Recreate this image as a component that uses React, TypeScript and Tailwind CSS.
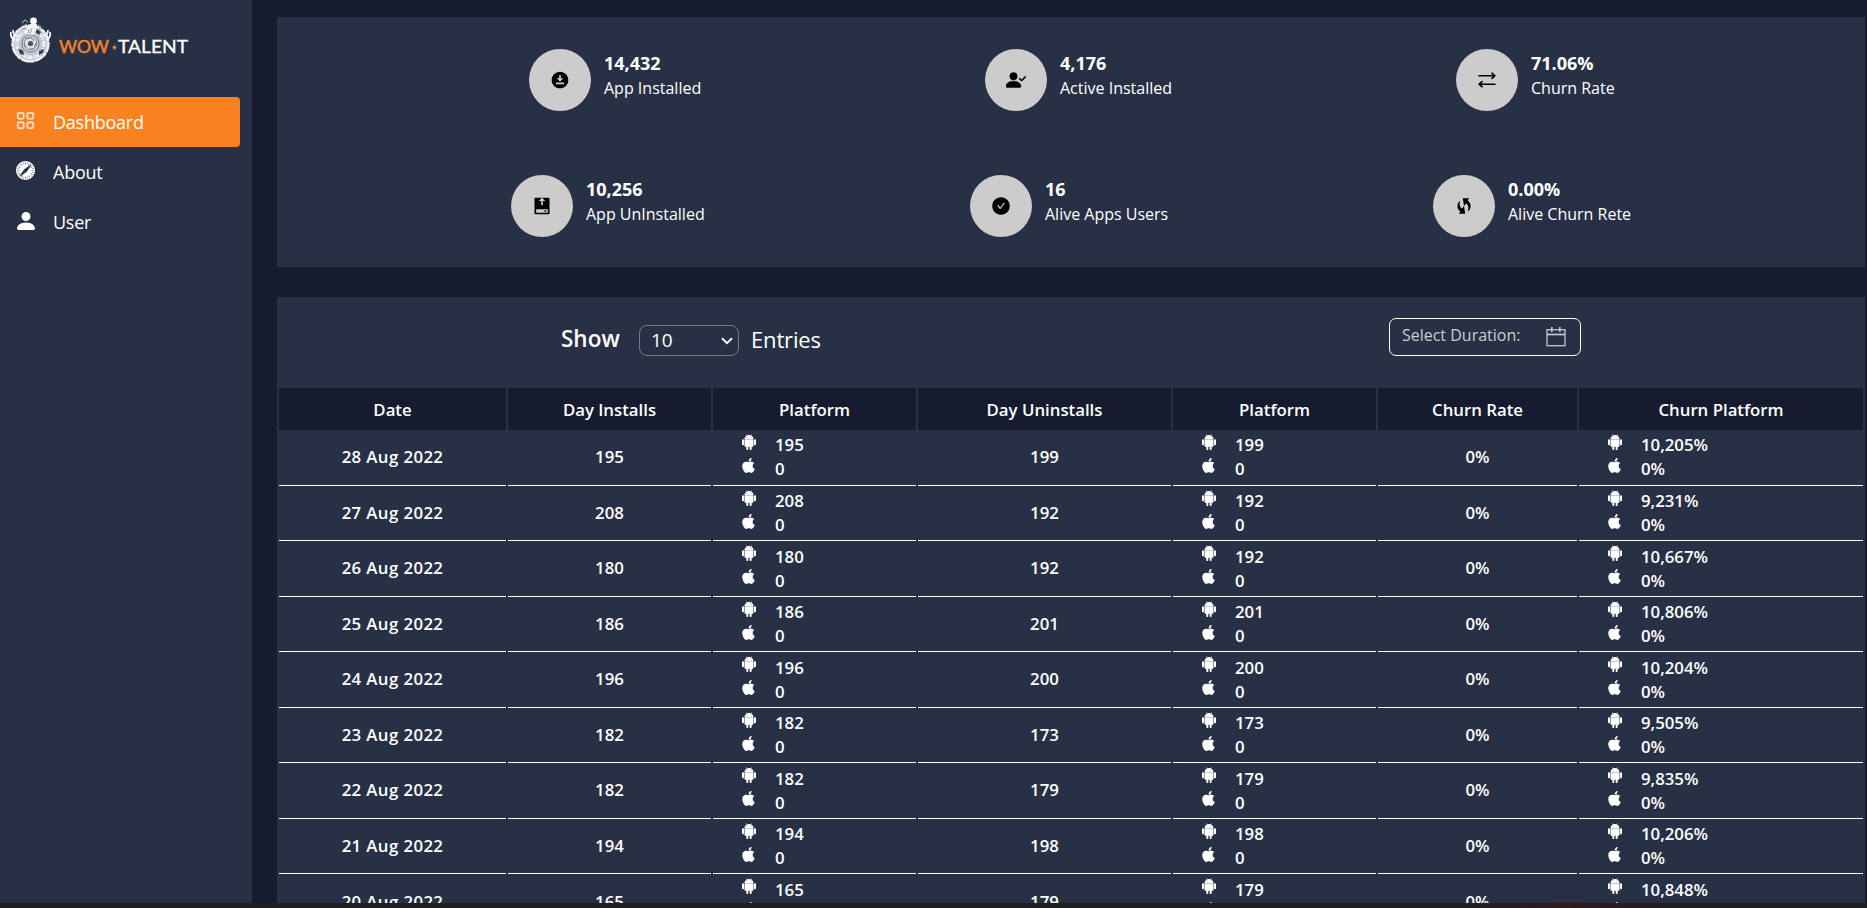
import type { ReactNode } from "react";
import {
  BsAndroid2,
  BsBrowserSafari,
  BsFillPersonCheckFill,
  BsFillPersonFill,
  BsGrid,
} from "react-icons/bs";
import { MdDownloadForOffline } from "react-icons/md";
import { RiUninstallFill } from "react-icons/ri";
import { AiFillCheckCircle } from "react-icons/ai";
import { FaApple } from "react-icons/fa";

function Emblem() {
  return (
    <svg width="41" height="46" viewBox="0 0 41 46" fill="none" className="shrink-0">
      <ellipse cx="20.5" cy="26.5" rx="18.5" ry="18.5" fill="#c3c6cf" />
      <circle cx="20.5" cy="26.5" r="18" stroke="#f4f5f8" strokeWidth="2.4" strokeDasharray="9 0.8 4 0.6" />
      <circle cx="20.5" cy="27" r="13.500" stroke="#eceef2" strokeWidth="3.400" strokeDasharray="3 1 1.4 1.2 5 0.8" />
      <path d="M8 32l5 1 1 5-4-1zM29 34l5-2-1 4-4 2zM27 12l4 3-2 3-4-3z" fill="#3a4258" />
      <path d="M1 15q-1 6 4 8M3 13q0 5 5 6M40 15q1 6-4 8M38 13q0 5-5 6" stroke="#f4f5f7" strokeWidth="1.8" />
      <circle cx="20.500" cy="26.500" r="9" fill="#6c7384" />
      <circle cx="20.500" cy="26.500" r="8" fill="#dfe1e7" />
      <circle cx="20.500" cy="26.500" r="6.400" stroke="#7a8192" strokeWidth="0.9" />
      <circle cx="20.500" cy="26.500" r="2.600" fill="#4b5368" />
      <path d="M20 20l4 4M27 25l-3 5M24 32h-5M16 31l-2-5M15 22l5-1" stroke="#6b7284" strokeWidth="0.9" />
      <path d="M15 17l2-7 4-3h6l-1 7-3 4z" fill="#f2f3f6" />
      <circle cx="23.500" cy="4" r="3.400" fill="#ffffff" />
      <path d="M12 6l3-3 3 2M13 9l4-2M11 12l5-1M28 8l3 2-2 2" stroke="#9499a8" strokeWidth="1.1" />
      <path d="M19 12l-1 5M22 11l-2 6" stroke="#7c8394" strokeWidth="0.8" />
    </svg>
  );
}

function Wordmark() {
  return (
    <svg width="132" height="18" viewBox="0 0 132 18" className="shrink-0 font-['Lato']">
      <text
        x="0"
        y="15.500"
        fontSize="16.500"
        fill="#ee8427"
        stroke="#ee8427"
        strokeWidth="0.500"
        textLength="50"
        lengthAdjust="spacingAndGlyphs"
      >
        WOW
      </text>
      <path d="M55.500 7.600l.8 2 2 .1-1.600 1.300.6 2-1.800-1.200-1.800 1.200.6-2-1.600-1.300 2-.1z" fill="#ee8427" />
      <text
        x="59"
        y="15.500"
        fontSize="16.500"
        fill="#ffffff"
        stroke="#ffffff"
        strokeWidth="0.300"
        textLength="70"
        lengthAdjust="spacingAndGlyphs"
      >
        TALENT
      </text>
    </svg>
  );
}

function SwapArrows() {
  return (
    <svg width="18" height="16" viewBox="0 0 18 16" fill="none" stroke="#000" strokeWidth="1.600" strokeLinecap="round" strokeLinejoin="round">
      <path d="M1 3.800h16M14 1.200l2.800 2.600L14 6.400M17 12.200H1M4 9.600l-2.800 2.600L4 14.800" />
    </svg>
  );
}

function LoopArrows() {
  return (
    <svg width="14" height="16" viewBox="0 0 14 16" fill="#000">
      <path d="M5.800.3h6.400l-1.600 2C12.800 4 13.900 6.300 13.500 8.900c-.3 2-1.300 3.500-2.900 4.600.7-1.600 1-3.200.7-4.700-.3-1.500-1.100-2.600-2.300-3.300L7 8z" />
      <path d="M8.200 15.700H1.800l1.600-2C1.200 12 .1 9.700.5 7.100c.3-2 1.300-3.500 2.900-4.600-.7 1.600-1 3.200-.7 4.700.3 1.500 1.100 2.600 2.300 3.300L7 8z" />
    </svg>
  );
}

function CalendarIcon() {
  return (
    <svg width="20" height="20" viewBox="0 0 20 20" fill="none" stroke="#c4c6cb">
      <rect x="1" y="2.700" width="18" height="16" strokeWidth="1.300" />
      <path d="M1 7.500h18" strokeWidth="1.700" />
      <path d="M5.800 0v5M13.800 0v5" strokeWidth="1.600" />
    </svg>
  );
}

function NavItem({ icon, label, active }: { icon: ReactNode; label: string; active?: boolean }) {
  return (
    <a
      className={
        active
          ? "flex h-[50px] w-60 items-center rounded-r-[4px] bg-[#f8821f] pl-4 text-white"
          : "flex h-[50px] w-60 items-center pl-4 text-white"
      }
    >
      <span className="mb-[3px] w-[37px]">{icon}</span>
      <span className="text-[18px] tracking-[-0.250px]">{label}</span>
    </a>
  );
}

function Stat({ icon, value, label, className }: { icon: ReactNode; value: string; label: string; className: string }) {
  return (
    <div className={`flex items-start gap-[13px] ${className}`}>
      <div className="flex size-[62px] shrink-0 items-center justify-center rounded-full bg-[#cccccc] text-black">
        {icon}
      </div>
      <div className="pt-px whitespace-nowrap">
        <div className="text-[18px] leading-[26px] font-bold">{value}</div>
        <div className="text-[16px] leading-[25px]">{label}</div>
      </div>
    </div>
  );
}

function Platform({ android, apple }: { android: string; apple: string }) {
  return (
    <div className="flex h-full flex-col border-b border-white pt-[3px] pl-[28px]">
      <div className="flex h-6 items-center">
        <BsAndroid2 size={16} className="mb-[6px]" />
        <span className="ml-[18px]">{android}</span>
      </div>
      <div className="flex h-6 items-center">
        <FaApple size={17} className="mb-[7px] -ml-px" />
        <span className="ml-[18px]">{apple}</span>
      </div>
    </div>
  );
}

function Cell({ children }: { children: ReactNode }) {
  return <div className="flex h-full items-center justify-center border-b border-white pb-px">{children}</div>;
}

const columns = "grid grid-cols-[227px_203px_203px_253px_203px_199px_284px] gap-x-[2px]";

const headings = ["Date", "Day Installs", "Platform", "Day Uninstalls", "Platform", "Churn Rate", "Churn Platform"];

const rows = [
  { date: "28 Aug 2022", installs: "195", uninstalls: "199", churn: "10,205%" },
  { date: "27 Aug 2022", installs: "208", uninstalls: "192", churn: "9,231%" },
  { date: "26 Aug 2022", installs: "180", uninstalls: "192", churn: "10,667%" },
  { date: "25 Aug 2022", installs: "186", uninstalls: "201", churn: "10,806%" },
  { date: "24 Aug 2022", installs: "196", uninstalls: "200", churn: "10,204%" },
  { date: "23 Aug 2022", installs: "182", uninstalls: "173", churn: "9,505%" },
  { date: "22 Aug 2022", installs: "182", uninstalls: "179", churn: "9,835%" },
  { date: "21 Aug 2022", installs: "194", uninstalls: "198", churn: "10,206%" },
  { date: "20 Aug 2022", installs: "165", uninstalls: "179", churn: "10,848%" },
];

export default function App() {
  return (
    <div className="flex h-[908px] w-[1867px] flex-col overflow-hidden bg-[#161b30] font-['Open_Sans',sans-serif] text-white">
      <div className="flex h-[903px] overflow-hidden">
        <aside className="w-[252px] shrink-0 bg-[#283046]">
          <div className="flex h-[97px] items-start pt-[17px] pl-[10px]">
            <Emblem />
            <div className="pt-[20px] pl-[8px]">
              <Wordmark />
            </div>
          </div>
          <nav>
            <NavItem active icon={<BsGrid size={19} strokeWidth={0.4} className="opacity-85" />} label="Dashboard" />
            <NavItem icon={<BsBrowserSafari size={19} />} label="About" />
            <NavItem icon={<BsFillPersonFill size={24} className="-ml-[2.500px]" />} label="User" />
          </nav>
        </aside>

        <main className="ml-[25px] w-[1588px] pt-[17px]">
          <section className="h-[250px] bg-[#283046] pt-8">
            <div className="flex h-[126px] pl-[252px]">
              <Stat className="w-[456px]" icon={<MdDownloadForOffline size={20} />} value="14,432" label="App Installed" />
              <Stat className="w-[471px]" icon={<BsFillPersonCheckFill size={20} strokeWidth={0.4} stroke="#000" />} value="4,176" label="Active Installed" />
              <Stat className="w-[300px]" icon={<SwapArrows />} value="71.06%" label="Churn Rate" />
            </div>
            <div className="flex pl-[234px]">
              <Stat className="w-[459px]" icon={<RiUninstallFill size={20} />} value="10,256" label="App UnInstalled" />
              <Stat className="w-[463px]" icon={<AiFillCheckCircle size={20} />} value="16" label="Alive Apps Users" />
              <Stat className="w-[300px]" icon={<LoopArrows />} value="0.00%" label="Alive Churn Rete" />
            </div>
          </section>

          <section className="mt-[30px] bg-[#283046] px-[2px]">
            <div className="flex h-[91px] items-start">
              <div className="flex items-center pt-[28px] pl-[282px] text-[22px]">
                <span className="mb-[3px] w-[78px] text-[22.500px] leading-[26px] font-semibold">Show</span>
                <div className="flex h-[31px] w-[100px] items-center justify-between rounded-[8px] border border-[#767a83] pr-[5px] pl-[11px] text-[19px]">
                  <span>10</span>
                  <svg width="12" height="8" viewBox="0 0 12 8" fill="none" stroke="#fff" strokeWidth="2">
                    <path d="M1 1.200l5 5 5-5" />
                  </svg>
                </div>
                <span className="mb-[4px] ml-[12px] leading-[26px] tracking-[-0.150px]">Entries</span>
              </div>
              <div className="mt-[21px] ml-[568px] flex h-[38px] w-[192px] justify-between rounded-[7px] border border-white pt-[4px] pr-[14px] pl-[12px] text-[16px] text-[#cccccc]">
                <span className="leading-6">Select Duration:</span>
                <span className="pt-[4px]">
                  <CalendarIcon />
                </span>
              </div>
            </div>

            <div className="text-[16.800px] font-semibold">
              <div className={`${columns} h-[42px]`}>
                {headings.map((heading, i) => (
                  <div key={i} className="flex items-center justify-center bg-[#161b30] pt-[2px]">
                    {heading}
                  </div>
                ))}
              </div>
              {rows.map((row) => (
                <div key={row.date} className={`${columns} h-[55.550px]`}>
                  <Cell>
                    <span className="tracking-[0.400px]">{row.date}</span>
                  </Cell>
                  <Cell>{row.installs}</Cell>
                  <Platform android={row.installs} apple="0" />
                  <Cell>{row.uninstalls}</Cell>
                  <Platform android={row.uninstalls} apple="0" />
                  <Cell>0%</Cell>
                  <Platform android={row.churn} apple="0%" />
                </div>
              ))}
            </div>
          </section>
        </main>
      </div>
      <div className="h-[5px] bg-[linear-gradient(90deg,#1f1f1f_0%,#1f1f1f_78%,#35191b_84%,#1f1f1f_90%,#1f1f1f_100%)]" />
    </div>
  );
}
